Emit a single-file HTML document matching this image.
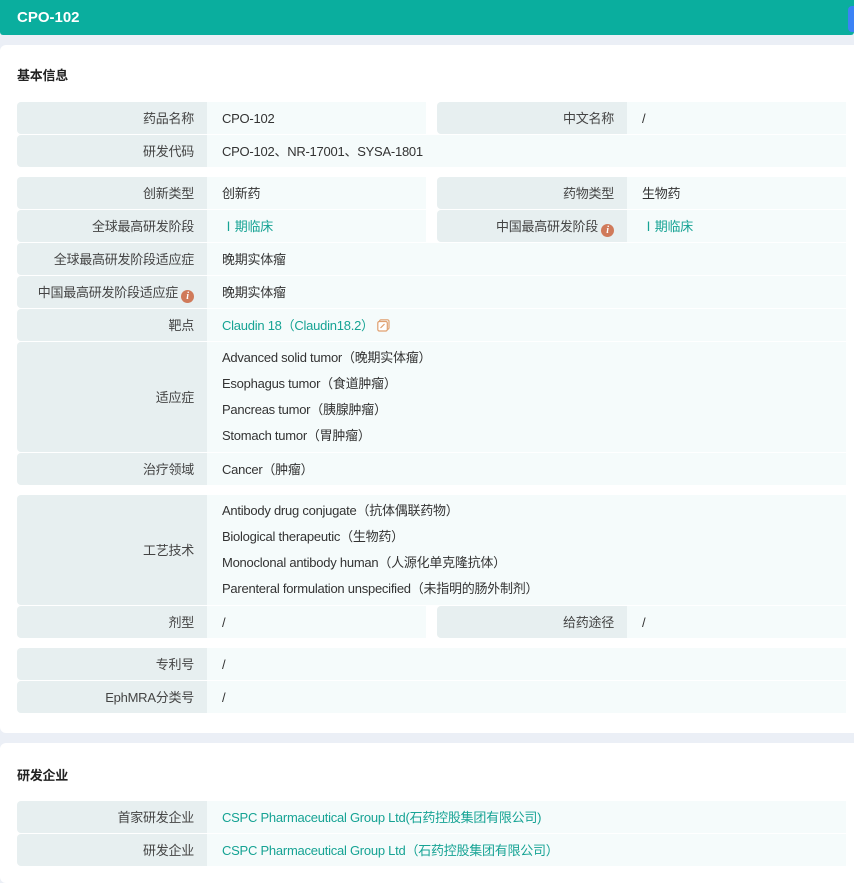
<!DOCTYPE html>
<html><head><meta charset="utf-8"><style>
*{margin:0;padding:0;box-sizing:border-box}
body{width:854px;height:874px;background:#ebeff6;position:relative;overflow:hidden;font-family:"Liberation Sans","Noto Sans CJK SC",sans-serif;font-size:13px;color:#333;letter-spacing:-0.25px}
.hdr{position:absolute;left:0;top:0;width:854px;height:35px;background:#0aae9e;border-radius:0 0 3px 3px}
.hdr span{position:absolute;left:17px;top:9px;color:#fff;font-weight:bold;font-size:15px;letter-spacing:0}
.tab{position:absolute;left:848px;top:6px;width:10px;height:26px;background:#3b82f6;border-radius:4px}
.card{position:absolute;left:0;width:854px;background:#fff;border-radius:6px 0 0 6px}
.ttl{position:absolute;left:17px;font-weight:bold;font-size:13px;color:#222}
.l{position:absolute;background:#e7eff0;border-radius:4px 0 0 4px;text-align:right;padding-right:13px;color:#444;padding-top:1px}
.v{position:absolute;background:#f5fbfb;padding-left:15px;color:#333;padding-top:1px}
.g{color:#16a394}
.i{display:inline-block;width:13px;height:13px;border-radius:50%;background:#d07a5a;color:#fff;font-size:10px;font-style:italic;font-weight:bold;text-align:center;line-height:13px;vertical-align:-2px;margin-left:3px;font-family:"Liberation Serif",serif}
</style></head><body>
<div class="hdr"><span>CPO-102</span></div>
<div class="tab"></div>
<div class="card" style="top:45px;height:688px"></div>
<div class="card" style="top:743px;height:140px"></div>
<div class="ttl" style="top:65px">基本信息</div>
<div class="ttl" style="top:765px">研发企业</div>

<div class="l" style="left:17px;top:102px;width:190px;height:32px;line-height:32px">药品名称</div>
<div class="v" style="left:207px;top:102px;width:219px;height:32px;line-height:32px">CPO-102</div>
<div class="l" style="left:437px;top:102px;width:190px;height:32px;line-height:32px">中文名称</div>
<div class="v" style="left:627px;top:102px;width:219px;height:32px;line-height:32px">/</div>
<div class="l" style="left:17px;top:135px;width:190px;height:32px;line-height:32px">研发代码</div>
<div class="v" style="left:207px;top:135px;width:639px;height:32px;line-height:32px">CPO-102、NR-17001、SYSA-1801</div>

<div class="l" style="left:17px;top:177px;width:190px;height:32px;line-height:32px">创新类型</div>
<div class="v" style="left:207px;top:177px;width:219px;height:32px;line-height:32px">创新药</div>
<div class="l" style="left:437px;top:177px;width:190px;height:32px;line-height:32px">药物类型</div>
<div class="v" style="left:627px;top:177px;width:219px;height:32px;line-height:32px">生物药</div>
<div class="l" style="left:17px;top:210px;width:190px;height:32px;line-height:32px">全球最高研发阶段</div>
<div class="v g" style="left:207px;top:210px;width:219px;height:32px;line-height:32px">Ⅰ期临床</div>
<div class="l" style="left:437px;top:210px;width:190px;height:32px;line-height:32px">中国最高研发阶段<span class="i">i</span></div>
<div class="v g" style="left:627px;top:210px;width:219px;height:32px;line-height:32px">Ⅰ期临床</div>
<div class="l" style="left:17px;top:243px;width:190px;height:32px;line-height:32px">全球最高研发阶段适应症</div>
<div class="v" style="left:207px;top:243px;width:639px;height:32px;line-height:32px">晚期实体瘤</div>
<div class="l" style="left:17px;top:276px;width:190px;height:32px;line-height:32px">中国最高研发阶段适应症<span class="i">i</span></div>
<div class="v" style="left:207px;top:276px;width:639px;height:32px;line-height:32px">晚期实体瘤</div>
<div class="l" style="left:17px;top:309px;width:190px;height:32px;line-height:32px">靶点</div>
<div class="v g" style="left:207px;top:309px;width:639px;height:32px;line-height:32px">Claudin 18（Claudin18.2）<svg width="13" height="13" viewBox="0 0 13 13" style="vertical-align:-2px;margin-left:3px"><rect x="2.5" y="0.8" width="9.5" height="9.5" rx="1.5" fill="none" stroke="#e0a070" stroke-width="1.2"/><rect x="0.8" y="2.5" width="9.5" height="9.5" rx="1.5" fill="#fff" stroke="#e0a070" stroke-width="1.2"/><path d="M3.5 9L7.5 5" stroke="#e0a070" stroke-width="1.2"/></svg></div>
<div class="l" style="left:17px;top:342px;width:190px;height:110px;line-height:110px">适应症</div>
<div class="v" style="left:207px;top:342px;width:639px;height:110px;padding-top:3px;line-height:26px">Advanced solid tumor（晚期实体瘤）<br>Esophagus tumor（食道肿瘤）<br>Pancreas tumor（胰腺肿瘤）<br>Stomach tumor（胃肿瘤）</div>
<div class="l" style="left:17px;top:453px;width:190px;height:32px;line-height:32px">治疗领域</div>
<div class="v" style="left:207px;top:453px;width:639px;height:32px;line-height:32px">Cancer（肿瘤）</div>

<div class="l" style="left:17px;top:495px;width:190px;height:110px;line-height:110px">工艺技术</div>
<div class="v" style="left:207px;top:495px;width:639px;height:110px;padding-top:3px;line-height:26px">Antibody drug conjugate（抗体偶联药物）<br>Biological therapeutic（生物药）<br>Monoclonal antibody human（人源化单克隆抗体）<br>Parenteral formulation unspecified（未指明的肠外制剂）</div>
<div class="l" style="left:17px;top:606px;width:190px;height:32px;line-height:32px">剂型</div>
<div class="v" style="left:207px;top:606px;width:219px;height:32px;line-height:32px">/</div>
<div class="l" style="left:437px;top:606px;width:190px;height:32px;line-height:32px">给药途径</div>
<div class="v" style="left:627px;top:606px;width:219px;height:32px;line-height:32px">/</div>

<div class="l" style="left:17px;top:648px;width:190px;height:32px;line-height:32px">专利号</div>
<div class="v" style="left:207px;top:648px;width:639px;height:32px;line-height:32px">/</div>
<div class="l" style="left:17px;top:681px;width:190px;height:32px;line-height:32px">EphMRA分类号</div>
<div class="v" style="left:207px;top:681px;width:639px;height:32px;line-height:32px">/</div>

<div class="l" style="left:17px;top:801px;width:190px;height:32px;line-height:32px">首家研发企业</div>
<div class="v g" style="left:207px;top:801px;width:639px;height:32px;line-height:32px">CSPC Pharmaceutical Group Ltd(石药控股集团有限公司)</div>
<div class="l" style="left:17px;top:834px;width:190px;height:32px;line-height:32px">研发企业</div>
<div class="v g" style="left:207px;top:834px;width:639px;height:32px;line-height:32px">CSPC Pharmaceutical Group Ltd（石药控股集团有限公司）</div>
</body></html>
